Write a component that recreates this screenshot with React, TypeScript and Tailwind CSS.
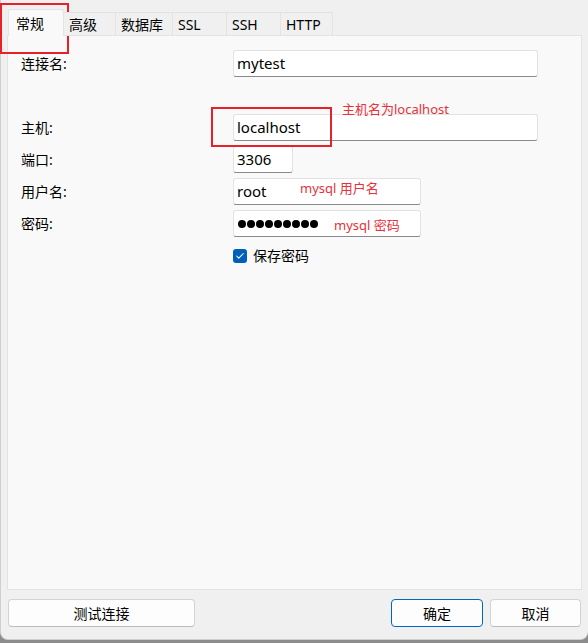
import { Check } from 'lucide-react';

const FONT = { fontFamily: '"Segoe UI", "Noto Sans", "Noto Sans CJK SC", sans-serif' };

const tabs = [
  { label: '高级', w: 'w-[52px]' },
  { label: '数据库', w: 'w-[57px]' },
  { label: 'SSL', w: 'w-[54px]' },
  { label: 'SSH', w: 'w-[54px]' },
  { label: 'HTTP', w: 'w-[52px]' },
];

function Field({ w, children, note }: { w: string; children?: React.ReactNode; note?: React.ReactNode }) {
  return (
    <div
      className={`${w} h-[27px] bg-white border border-[#e3e3e3] border-b-[#8a8a8a] rounded-[3px] flex items-center pl-[3px] text-[15px] text-black relative`}
    >
      {children}
      {note}
    </div>
  );
}

function Btn({ children, primary, w }: { children: React.ReactNode; primary?: boolean; w: string }) {
  return (
    <button
      className={`${w} h-[28px] rounded-[4px] bg-[#fdfdfd] text-[14px] text-black flex items-center justify-center border ${
        primary ? 'border-[#0067c0]' : 'border-[#d3d3d3] border-b-[#bcbcbc]'
      }`}
    >
      {children}
    </button>
  );
}

export default function App() {
  return (
    <div className="w-[588px] h-[643px] bg-[#8c8c8c] relative" style={FONT}>
      <div className="w-[588px] h-[640px] bg-[#f0f0f0] rounded-b-[8px] border-l border-b border-[#cfcfcf] flex flex-col px-[6px] pt-[9px]">
        {/* tabs */}
        <div className="flex items-end h-[27px] relative z-10 pl-[1px]">
          <div className="w-[56px] h-[27px] bg-[#f9f9f9] border border-[#e3e3e3] border-b-[#f9f9f9] rounded-t-[3px] pl-[7px] pt-[3px] text-[14px] text-black">
            常规
          </div>
          {tabs.map((t) => (
            <div
              key={t.label}
              className={`${t.w} h-[24px] bg-[#f0f0f0] border border-l-0 border-[#e3e3e3] pl-[5px] pt-[1px] text-[14px] text-black`}
            >
              {t.label}
            </div>
          ))}
        </div>

        {/* panel */}
        <div className="-mt-px w-[575px] h-[555px] bg-[#f9f9f9] border border-[#e3e3e3] pl-[13px] pt-[14px]">
          <div className="grid grid-cols-[212px_1fr] items-center text-[14px] text-black gap-y-[5px]">
            <div>连接名:</div>
            <Field w="w-[305px]">mytest</Field>

            <div className="mt-[32px]">主机:</div>
            <div className="mt-[32px]">
              <Field w="w-[305px]">localhost</Field>
            </div>

            <div>端口:</div>
            <Field w="w-[60px]">3306</Field>

            <div>用户名:</div>
            <Field
              w="w-[188px]"
              note={<span className="absolute left-[66px] top-[0px] text-[13px] text-[#e8313a]">mysql 用户名</span>}
            >
              root
            </Field>

            <div>密码:</div>
            <Field
              w="w-[188px]"
              note={<span className="absolute left-[100px] top-[5px] text-[13px] text-[#e8313a]">mysql 密码</span>}
            >
              <span className="flex gap-[1px] pl-[1px]">
                {Array.from({ length: 9 }).map((_, i) => (
                  <span key={i} className="w-[8px] h-[8px] rounded-full bg-black" />
                ))}
              </span>
            </Field>

            <div />
            <div className="flex items-center gap-[6px] mt-[3px]">
              <span className="w-[14px] h-[14px] rounded-[3px] bg-[#005fb8] flex items-center justify-center">
                <Check size={10} strokeWidth={2.5} className="text-white" />
              </span>
              <span>保存密码</span>
            </div>
          </div>
        </div>

        {/* buttons */}
        <div className="flex items-center mt-[9px] pl-[1px]">
          <Btn w="w-[187px]">测试连接</Btn>
          <div className="flex-1" />
          <Btn w="w-[92px]" primary>
            确定
          </Btn>
          <div className="w-[7px]" />
          <Btn w="w-[91px]">取消</Btn>
          <div className="w-[1px]" />
        </div>
      </div>

      {/* annotations */}
      <div className="absolute left-[0px] top-[3px] w-[69px] h-[51px] border-2 border-[#e8202a]" />
      <div className="absolute left-[211px] top-[107px] w-[121px] h-[40px] border-2 border-[#e8202a]" />
      <div className="absolute left-[342px] top-[100px] text-[13px] text-[#e8313a]">主机名为localhost</div>
    </div>
  );
}
